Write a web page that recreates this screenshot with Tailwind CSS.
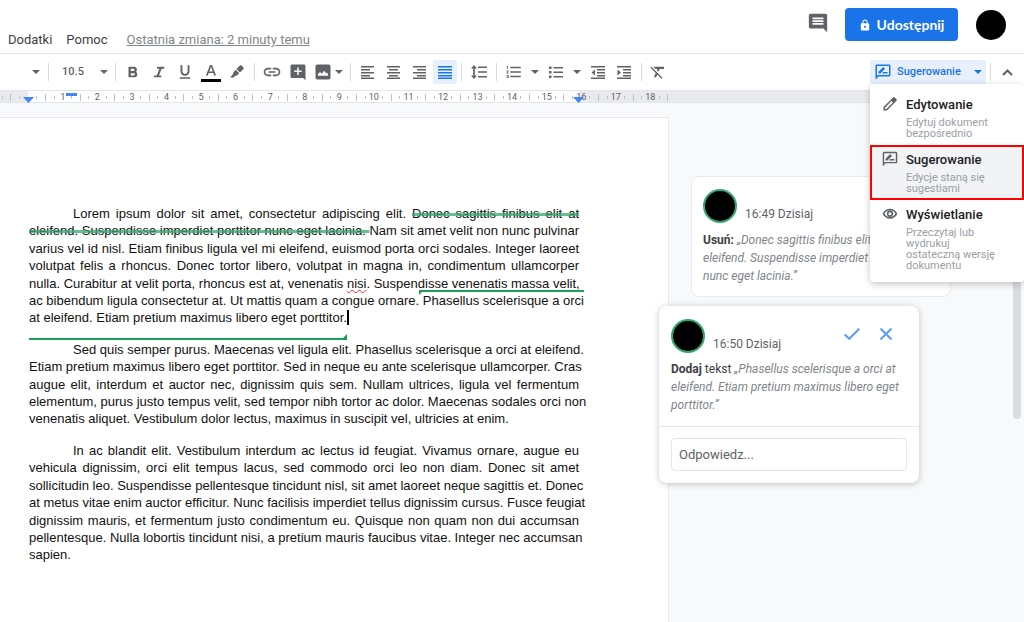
<!DOCTYPE html>
<html lang="pl">
<head>
<meta charset="utf-8">
<meta name="viewport" content="width=device-width, initial-scale=1">
<title>Dokument</title>
<script src="https://cdn.jsdelivr.net/npm/@tailwindcss/browser@4"></script>
</head>
<body class="flex h-screen flex-col overflow-hidden bg-[#f8f9fa] font-[Roboto,sans-serif] text-[#3c4043]">
<svg class="hidden" aria-hidden="true">
  <symbol id="caret" viewBox="0 0 8 4"><path d="M0 0h8L4 4z"/></symbol>
  <symbol id="suggest" viewBox="0 0 24 24"><path d="M20 2H4c-1.100 0-2 .9-2 2v18l4-4h14c1.100 0 2-.9 2-2V4c0-1.100-.9-2-2-2zm0 14H5.200L4 17.200V4h16v12zM10.500 14h7.500v-2h-5.500zM6 14h2.500l5.900-5.900c.2-.2.2-.5 0-.7l-1.800-1.800c-.2-.2-.5-.2-.7 0L6 11.500z"/></symbol>
</svg>

<header class="flex h-[54px] shrink-0 items-start border-b border-[#e3e5e8] bg-white pr-[18px] pl-2">
  <nav class="mt-[31px] flex gap-[14px] text-[13px] leading-[18px]" aria-label="Menu">
    <button type="button">Dodatki</button>
    <button type="button">Pomoc</button>
    <a href="#historia" class="ml-[5px] text-[#80868b] underline">Ostatnia zmiana: 2 minuty temu</a>
  </nav>
  <div class="ml-auto flex items-center pt-2">
    <button type="button" aria-label="Komentarze" class="mr-4"><svg class="-mt-[3px] size-[22px] fill-[#5f6368]" viewBox="0 0 24 24"><path d="M22 4c0-1.100-.9-2-2-2H4c-1.100 0-2 .9-2 2v12c0 1.100.9 2 2 2h14l4 4V4zm-4 10H6v-2h12v2zm0-3H6V9h12v2zm0-3H6V6h12v2z"/></svg></button>
    <button type="button" class="mr-[18px] flex h-[33px] w-[113px] items-center justify-center gap-[6px] rounded bg-[#1a73e8] font-[Lato,sans-serif] text-[14px] font-bold text-white">
      <svg class="size-3 fill-white" viewBox="3 0 18 23"><path d="M18 8h-1V6c0-2.760-2.240-5-5-5S7 3.240 7 6v2H6c-1.100 0-2 .9-2 2v10c0 1.100.9 2 2 2h12c1.100 0 2-.9 2-2V10c0-1.100-.9-2-2-2zm-6 9c-1.100 0-2-.9-2-2s.9-2 2-2 2 .9 2 2-.9 2-2 2zm3.100-9H8.900V6c0-1.710 1.390-3.100 3.100-3.100s3.100 1.390 3.100 3.100v2z"/></svg>
      Udostępnij
    </button>
    <button type="button" aria-label="Konto" class="size-[30px] rounded-full bg-black"></button>
  </div>
</header>

<div class="relative z-20 flex h-9 shrink-0 items-center bg-white fill-[#5f6368]" role="toolbar" aria-label="Formatowanie">
  <button type="button" aria-label="Czcionka" class="ml-7 flex w-4 justify-center"><svg class="h-1 w-2"><use href="#caret"/></svg></button>
  <span class="mx-1 h-[18px] w-px bg-[#dadce0]"></span>
  <button type="button" class="w-10 text-center text-[11px] font-medium text-[#5f6368]">10.5</button>
  <button type="button" aria-label="Rozmiar czcionki" class="flex w-[18px] justify-end pr-[3px]"><svg class="h-1 w-2"><use href="#caret"/></svg></button>
  <span class="mx-1 h-[18px] w-px bg-[#dadce0]"></span>
  <button type="button" aria-label="Pogrubienie" class="flex w-[26px] justify-center"><svg class="size-[18px]" viewBox="0 0 24 24"><path d="M15.600 11.790c.97-.67 1.650-1.770 1.650-2.790 0-2.260-1.750-4-4-4H6v14h8.040c2.090 0 3.710-1.700 3.710-3.790 0-1.520-.86-2.820-2.150-3.420zM9 7.500h3.500c.83 0 1.500.67 1.500 1.500s-.67 1.500-1.500 1.500H9v-3zm4 9H9v-3h4c.83 0 1.500.67 1.500 1.500s-.67 1.500-1.500 1.500z"/></svg></button>
  <button type="button" aria-label="Kursywa" class="flex w-[26px] justify-center"><svg class="size-[18px]" viewBox="0 0 24 24"><path d="M9.500 5v2.500h3L9 16.500H5.500V19H15v-2.500h-3.100l3.600-9H19V5z"/></svg></button>
  <button type="button" aria-label="Podkreślenie" class="flex w-[26px] justify-center"><svg class="size-[18px]" viewBox="0 0 24 24"><path d="M12 17c3.310 0 6-2.690 6-6V3h-2.500v8c0 1.930-1.570 3.500-3.500 3.500S8.500 12.930 8.500 11V3H6v8c0 3.310 2.690 6 6 6zm-7 2v2h14v-2H5z"/></svg></button>
  <button type="button" aria-label="Kolor tekstu" class="flex w-[26px] justify-center"><svg class="size-5" viewBox="0 0 20 20"><path d="M9 3h2l4.100 10.500h-1.900l-.9-2.500H7.700l-.9 2.500H4.900zM8.200 9.400h3.600L10 4.800z"/><path class="fill-black" d="M0 17h20v3H0z"/></svg></button>
  <button type="button" aria-label="Kolor wyróżnienia" class="flex w-[26px] justify-center"><svg class="size-4" viewBox="0 0 16 16"><path d="M11 1.500c.5-.5 1-.5 1.500 0l2 2c.5.500.5 1 0 1.500l-3.600 3.600-3.500-3.500zM6.700 5.800l3.500 3.500-2 2c-.6.600-1.200.6-1.800.2l-1.800 2H1l3.300-3.700c-.4-.6-.3-1.300.3-1.900z"/></svg></button>
  <span class="mx-1 h-[18px] w-px bg-[#dadce0]"></span>
  <button type="button" aria-label="Wstaw link" class="flex w-[26px] justify-center"><svg class="size-5" viewBox="0 0 24 24"><path d="M3.900 12c0-1.710 1.390-3.100 3.100-3.100h4V7H7c-2.760 0-5 2.240-5 5s2.240 5 5 5h4v-1.900H7c-1.710 0-3.100-1.390-3.100-3.100zM8 13h8v-2H8v2zm9-6h-4v1.900h4c1.710 0 3.100 1.390 3.100 3.100s-1.390 3.100-3.100 3.100h-4V17h4c2.760 0 5-2.240 5-5s-2.240-5-5-5z"/></svg></button>
  <button type="button" aria-label="Dodaj komentarz" class="flex w-[26px] justify-center"><svg class="size-[18px]" viewBox="0 0 24 24"><path d="M22 4c0-1.100-.9-2-2-2H4c-1.100 0-2 .9-2 2v14c0 1.100.9 2 2 2h15l3 3V4zm-5 8h-4v4h-2v-4H7v-2h4V6h2v4h4z"/></svg></button>
  <button type="button" aria-label="Wstaw obraz" class="flex w-6 justify-center"><svg class="size-5" viewBox="0 0 24 24"><path d="M21 19V5c0-1.100-.9-2-2-2H5c-1.100 0-2 .9-2 2v14c0 1.100.9 2 2 2h14c1.100 0 2-.9 2-2zM6 16.500v-2l2.500-2.500 2 2 3-3.500 2 3 1-1 1.500 2v2z"/></svg></button>
  <button type="button" aria-label="Opcje obrazu" class="flex w-[11px] justify-start"><svg class="h-1 w-2"><use href="#caret"/></svg></button>
  <span class="mx-1 h-[18px] w-px bg-[#dadce0]"></span>
  <button type="button" aria-label="Do lewej" class="flex w-[26px] justify-center"><svg class="size-[14px]" viewBox="0 0 14 14"><path d="M0 1h13v1.500H0zM0 4h9v1.500H0zM0 7h13v1.500H0zM0 10h9v1.500H0zM0 12.500h13V14H0z"/></svg></button>
  <button type="button" aria-label="Do środka" class="flex w-[26px] justify-center"><svg class="size-[14px]" viewBox="0 0 14 14"><path d="M0 1h13v1.500H0zM2 4h9v1.500H2zM0 7h13v1.500H0zM2 10h9v1.500H2zM0 12.500h13V14H0z"/></svg></button>
  <button type="button" aria-label="Do prawej" class="flex w-[26px] justify-center"><svg class="size-[14px]" viewBox="0 0 14 14"><path d="M0 1h13v1.500H0zM4 4h9v1.500H4zM0 7h13v1.500H0zM4 10h9v1.500H4zM0 12.500h13V14H0z"/></svg></button>
  <button type="button" aria-label="Wyjustuj" aria-pressed="true" class="flex h-6 w-6 items-center justify-center rounded-xs bg-[#e8f0fe] fill-[#1a73e8]"><svg class="size-[14px]" viewBox="0 0 14 14"><path d="M0 1h14v1.500H0zM0 4h14v1.500H0zM0 7h14v1.500H0zM0 10h14v1.500H0zM0 12.500h14V14H0z"/></svg></button>
  <span class="mx-1 h-[18px] w-px bg-[#dadce0]"></span>
  <button type="button" aria-label="Odstępy" class="flex w-[26px] justify-center"><svg class="h-[14px] w-4" viewBox="0 0 16 14"><path d="M3 0l3 3.500H3.800v7H6L3 14 0 10.500h2.200v-7H0zM7 1.500h9V3H7zM7 6.200h9v1.600H7zM7 11h9v1.500H7z"/></svg></button>
  <span class="mx-1 h-[18px] w-px bg-[#dadce0]"></span>
  <button type="button" aria-label="Lista numerowana" class="flex w-[26px] justify-center"><svg class="size-[18px]" viewBox="0 0 24 24"><path d="M2 17h2v.5H3v1h1v.5H2v1h3v-4H2v1zm1-9h1V4H2v1h1v3zm-1 3h1.800L2 13.100v.9h3v-1H3.200L5 10.900V10H2v1zm5-6v2h14V5H7zm0 14h14v-2H7v2zm0-6h14v-2H7v2z"/></svg></button>
  <button type="button" aria-label="Opcje numeracji" class="flex w-4 justify-center"><svg class="h-1 w-2"><use href="#caret"/></svg></button>
  <button type="button" aria-label="Lista punktowana" class="flex w-[26px] justify-center"><svg class="h-[14px] w-[14px]" viewBox="0 0 14 14"><path d="M0 1.500h2.500V4H0zM0 6h2.500v2.500H0zM0 10.500h2.500V13H0zM4.500 2H14v1.500H4.500zM4.500 6.500H14V8H4.500zM4.500 11H14v1.500H4.500z"/></svg></button>
  <button type="button" aria-label="Opcje punktorów" class="flex w-4 justify-center"><svg class="h-1 w-2"><use href="#caret"/></svg></button>
  <button type="button" aria-label="Zmniejsz wcięcie" class="flex w-[26px] justify-center"><svg class="size-[14px]" viewBox="0 0 14 14"><path d="M0 1h14v1.500H0zM6 4h8v1.500H6zM6 7h8v1.500H6zM6 10h8v1.500H6zM0 12.500h14V14H0zM4 4.500v6L.5 7.500z"/></svg></button>
  <button type="button" aria-label="Zwiększ wcięcie" class="flex w-[26px] justify-center"><svg class="size-[14px]" viewBox="0 0 14 14"><path d="M0 1h14v1.500H0zM6 4h8v1.500H6zM6 7h8v1.500H6zM6 10h8v1.500H6zM0 12.500h14V14H0zM.5 4.500v6L4 7.500z"/></svg></button>
  <span class="mx-1 h-[18px] w-px bg-[#dadce0]"></span>
  <button type="button" aria-label="Wyczyść formatowanie" class="flex w-6 justify-center"><svg class="size-[18px]" viewBox="0 0 24 24"><path d="M3.270 5L2 6.270l6.970 6.970L6.500 19h3l1.570-3.660L16.730 21 18 19.730 3.550 5.270 3.270 5zM6 5v.18L8.820 8h2.400l-.72 1.680 2.100 2.100L14.210 8H20V5H6z"/></svg></button>

  <div class="relative ml-auto">
    <button type="button" aria-expanded="true" aria-haspopup="menu" class="flex h-6 w-[116px] items-center rounded-xs bg-[#e8f0fe] fill-[#1a73e8] pl-1 text-[11px] font-medium text-[#1a73e8]">
      <svg class="mr-[5px] size-[18px]"><use href="#suggest"/></svg>Sugerowanie<svg class="mr-1 ml-auto h-1 w-2"><use href="#caret"/></svg>
    </button>
    <div role="menu" class="absolute top-6 left-0 w-[154px] rounded bg-white pt-[6px] pb-[11px] shadow-[0_2px_7px_rgba(60,64,67,0.3)]">
      <button type="button" role="menuitem" class="flex w-full gap-2 px-3 pt-[6px] pb-[6px] text-left">
        <svg class="size-4 shrink-0 fill-[#5f6368]" viewBox="1 1 22 22"><path d="M20.700 5.200l-1.900-1.900c-.8-.8-2-.8-2.800 0L3 16.200V21h4.800L20.700 8c.8-.8.8-2 0-2.800zM7 19H5v-2l9-9 2 2z"/></svg>
        <span class="block"><span class="block text-[13px] leading-[18px] font-medium text-[#202124]">Edytowanie</span><span class="mt-[3px] block text-[11px] leading-[11px] text-[#9aa0a6]">Edytuj dokument<br>bezpośrednio</span></span>
      </button>
      <button type="button" role="menuitem" class="flex w-full gap-2 border-2 border-[#f00] bg-[#f1f3f4] pt-1 pr-2 pb-1 pl-[10px] text-left">
        <svg class="size-4 shrink-0 fill-[#5f6368]" viewBox="1 1 22 22"><use href="#suggest" width="24" height="24"/></svg>
        <span class="block"><span class="block text-[13px] leading-[18px] font-medium text-[#202124]">Sugerowanie</span><span class="mt-[3px] block text-[11px] leading-[11px] text-[#9aa0a6]">Edycje staną się<br>sugestiami</span></span>
      </button>
      <button type="button" role="menuitem" class="flex w-full gap-2 pt-[6px] pr-2 pl-3 text-left">
        <svg class="size-4 shrink-0 fill-[#5f6368]" viewBox="0 0 24 24"><path d="M12 6.500c3.600 0 6.700 2 8.200 5-1.500 3-4.600 5-8.200 5s-6.700-2-8.200-5c1.500-3 4.600-5 8.200-5M12 4C7 4 2.730 7.110 1 11.500 2.730 15.890 7 19 12 19s9.270-3.110 11-7.500C21.270 7.110 17 4 12 4zm0 5.200a2.300 2.300 0 1 1 0 4.600 2.300 2.300 0 0 1 0-4.600m0-2.400a4.700 4.700 0 1 0 0 9.400 4.700 4.700 0 0 0 0-9.400z"/></svg>
        <span class="block"><span class="block text-[13px] leading-[18px] font-medium text-[#202124]">Wyświetlanie</span><span class="mt-[3px] block text-[11px] leading-[11px] text-[#9aa0a6]">Przeczytaj lub<br>wydrukuj<br>ostateczną wersję<br>dokumentu</span></span>
      </button>
    </div>
  </div>
  <span class="mx-1 h-[18px] w-px bg-[#dadce0]"></span>
  <button type="button" aria-label="Ukryj menu" class="mr-1 flex w-[25px] justify-center"><svg class="h-[7px] w-[11px] fill-none stroke-[#5f6368] stroke-2" viewBox="0 0 11 7"><path d="M1 6l4.500-4.500L10 6"/></svg></button>
</div>

<div class="relative flex h-[13px] shrink-0 border-y border-[#e3e5e8] bg-[#e8eaed]">
  <div class="absolute inset-y-0 left-7 w-[551px] bg-white"></div>
  <div id="ruler" class="relative -ml-[2px] flex w-[674px] shrink-0 items-center pt-[2px] text-[9px] leading-[9px] text-[#5f6368]"></div>
  <svg class="absolute top-[6px] left-[23px] h-[6px] w-[11px] fill-[#4285f4]" viewBox="0 0 11 6"><path d="M0 0h11L5.500 6z"/></svg>
  <span class="absolute top-[2px] left-[66px] h-[3px] w-[11px] bg-[#4285f4]"></span>
  <svg class="absolute top-[6px] left-[573px] h-[6px] w-[11px] fill-[#4285f4]" viewBox="0 0 11 6"><path d="M0 0h11L5.500 6z"/></svg>
</div>

<div class="flex min-h-0 grow">
  <main class="mt-[14px] w-[669px] shrink-0 border-t border-r border-[#e8eaed] bg-white pt-[87px] pr-[89px] pl-[29px] font-['Liberation_Sans',Arial,sans-serif] text-[13px] leading-[1.34] whitespace-nowrap text-[#111]">
    <p class="mb-[14px]">
      <span class="block indent-11 [text-align-last:justify]">Lorem ipsum dolor sit amet, consectetur adipiscing elit. <del class="decoration-[#34a871]/75 decoration-[3px]">Donec sagittis finibus elit at</del></span>
      <span class="block [text-align-last:justify]"><del class="decoration-[#34a871]/75 decoration-[3px]">eleifend. Suspendisse imperdiet porttitor nunc eget lacinia. </del>Nam sit amet velit non nunc pulvinar</span>
      <span class="block [text-align-last:justify]">varius vel id nisl. Etiam finibus ligula vel mi eleifend, euismod porta orci sodales. Integer laoreet</span>
      <span class="block [text-align-last:justify]">volutpat felis a rhoncus. Donec tortor libero, volutpat in magna in, condimentum ullamcorper</span>
      <span class="block [text-align-last:justify]">nulla. Curabitur at velit porta, rhoncus est at, venenatis <span class="underline decoration-red-500 decoration-wavy decoration-1">nisi</span>. Suspendisse venenatis massa velit,</span>
      <span class="block [text-align-last:justify]">ac bibendum ligula consectetur at. Ut mattis quam a congue ornare.<ins class="relative border-t-2 border-[#1e9e5a] pt-px no-underline"><svg class="absolute -top-[2px] left-0 size-[5px] fill-[#1e9e5a]" viewBox="0 0 5 5"><path d="M0 0h5L0 5z"/></svg> Phasellus scelerisque a orci</ins></span>
      <span class="block"><ins class="relative border-b-2 border-[#1e9e5a] pb-[13px] no-underline">at eleifend. Etiam pretium maximus libero eget porttitor.<svg class="absolute right-0 -bottom-[2px] size-[6px] fill-[#1e9e5a]" viewBox="0 0 6 6"><path d="M6 0v6H0z"/></svg></ins><span class="border-r-2 border-black"></span></span>
    </p>
    <p class="mb-[14px]">
      <span class="block indent-11 [text-align-last:justify]">Sed quis semper purus. Maecenas vel ligula elit. Phasellus scelerisque a orci at eleifend.</span>
      <span class="block [text-align-last:justify]">Etiam pretium maximus libero eget porttitor. Sed in neque eu ante scelerisque ullamcorper. Cras</span>
      <span class="block [text-align-last:justify]">augue elit, interdum et auctor nec, dignissim quis sem. Nullam ultrices, ligula vel fermentum</span>
      <span class="block [text-align-last:justify]">elementum, purus justo tempus velit, sed tempor nibh tortor ac dolor. Maecenas sodales orci non</span>
      <span class="block">venenatis aliquet. Vestibulum dolor lectus, maximus in suscipit vel, ultricies at enim.</span>
    </p>
    <p>
      <span class="block indent-11 [text-align-last:justify]">In ac blandit elit. Vestibulum interdum ac lectus id feugiat. Vivamus ornare, augue eu</span>
      <span class="block [text-align-last:justify]">vehicula dignissim, orci elit tempus lacus, sed commodo orci leo non diam. Donec sit amet</span>
      <span class="block [text-align-last:justify]">sollicitudin leo. Suspendisse pellentesque tincidunt nisl, sit amet laoreet neque sagittis et. Donec</span>
      <span class="block [text-align-last:justify]">at metus vitae enim auctor efficitur. Nunc facilisis imperdiet tellus dignissim cursus. Fusce feugiat</span>
      <span class="block [text-align-last:justify]">dignissim mauris, et fermentum justo condimentum eu. Quisque non quam non dui accumsan</span>
      <span class="block [text-align-last:justify]">pellentesque. Nulla lobortis tincidunt nisi, a pretium mauris faucibus vitae. Integer nec accumsan</span>
      <span class="block">sapien.</span>
    </p>
  </main>

  <aside class="z-10 flex grow flex-col text-[12px]" aria-label="Komentarze">
    <article class="mt-[73px] ml-[22px] h-[121px] w-[260px] rounded-lg border border-[#e8eaed] bg-white px-[11px] pt-3">
      <div class="flex items-end gap-2"><span class="size-[34px] rounded-full border-2 border-[#34a871] bg-black"></span><time class="text-[#5f6368]">16:49 Dzisiaj</time></div>
      <p class="mt-2 leading-[18px]"><b class="font-bold">Usuń:</b> <i class="text-[#80868b]">„Donec sagittis finibus elit at<br>eleifend. Suspendisse imperdiet porttitor<br>nunc eget lacinia.”</i></p>
    </article>
    <article class="mt-[9px] -ml-[10px] w-[260px] rounded-lg bg-white shadow-[0_1px_6px_rgba(60,64,67,0.3)]">
      <div class="px-3 pt-[13px] pb-3">
        <div class="flex items-end gap-2"><span class="size-[34px] rounded-full border-2 border-[#34a871] bg-black"></span><time class="text-[#5f6368]">16:50 Dzisiaj</time>
          <button type="button" aria-label="Zaakceptuj" class="mb-[13px] ml-auto"><svg class="h-3 w-4 fill-none stroke-[#5a9bf8] stroke-2" viewBox="0 0 16 12"><path d="M.7 6.500l4.500 4.300L15.300.7"/></svg></button>
          <button type="button" aria-label="Odrzuć" class="mr-[15px] mb-[13px] ml-3"><svg class="size-3 fill-none stroke-[#5a9bf8] stroke-2" viewBox="0 0 12 12"><path d="M.5.5l11 11M11.500.5l-11 11"/></svg></button>
        </div>
        <p class="mt-[7px] leading-[18px]"><b class="font-bold">Dodaj</b> tekst <i class="text-[#80868b]">„Phasellus scelerisque a orci at<br>eleifend. Etiam pretium maximus libero eget<br>porttitor.”</i></p>
      </div>
      <div class="border-t border-[#e3e5e8] px-3 pt-[11px] pb-3">
        <input type="text" aria-label="Odpowiedz" placeholder="Odpowiedz..." class="block h-[33px] w-full rounded border border-[#e3e5e8] px-[7px] text-[13px] placeholder:text-[#5f6368]">
      </div>
    </article>
  </aside>
  <div class="mr-[3px] h-[316px] w-2 shrink-0 rounded-full bg-[#dadce0]"></div>
</div>

<script>
  // Ruler: one slot per quarter centimetre, starting three slots left of zero.
  const ruler = document.getElementById('ruler');
  for (let k = -3; k < 75; k++) {
    const slot = document.createElement('span');
    slot.className = 'flex w-0 flex-1 justify-center';
    const mark = document.createElement('span');
    if (k % 4 === 0) mark.textContent = k > 0 ? k / 4 : '';
    else mark.className = k % 2 === 0 ? 'h-[7px] w-px bg-[#bdc1c6]' : 'h-[3px] w-px bg-[#bdc1c6]';
    slot.append(mark);
    ruler.append(slot);
  }
</script>
</body>
</html>
